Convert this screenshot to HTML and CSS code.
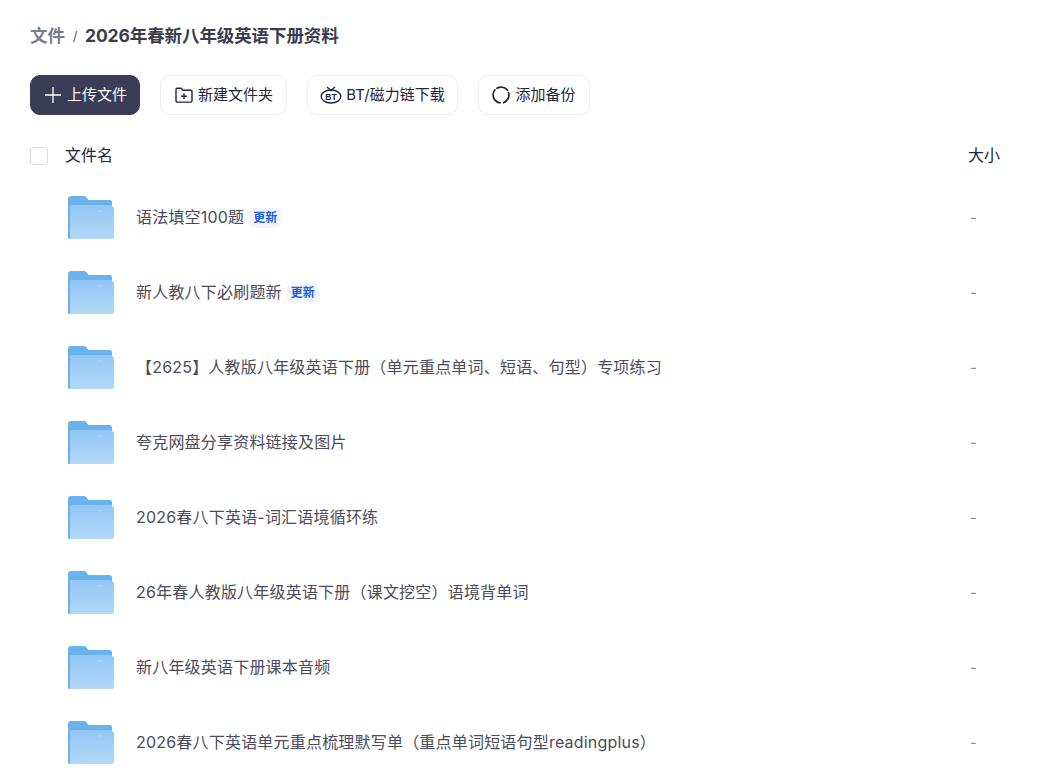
FILE: index.html
```html
<!DOCTYPE html>
<html lang="zh-CN">
<head>
<meta charset="utf-8">
<title>文件</title>
<link rel="stylesheet" href="styles.css">
</head>
<body>
<svg class="defs" width="0" height="0" aria-hidden="true">
  <defs>
    <linearGradient id="folderFront" x1="0" y1="0" x2="0" y2="1">
      <stop offset="0" stop-color="#92c6f3"/>
      <stop offset="1" stop-color="#b2d8f9"/>
    </linearGradient>
    <symbol id="folder" viewBox="0 0 46 43">
      <path d="M0 3a3 3 0 0 1 3-3h12.500c1.500 0 2.500.6 3.300 1.700L20.500 4H41.500a2.500 2.500 0 0 1 2.500 2.500V12H0z" fill="#6ab2ec"/>
      <path d="M0 6h3v37H1.500A1.500 1.500 0 0 1 0 41.500z" fill="#6ab2ec"/>
      <path d="M2 10.500a1.500 1.500 0 0 1 1.500-1.500H42c1 0 1.600.3 2.200 1l1.200 1.200c.4.400.6.900.6 1.500V41a2 2 0 0 1-2 2H2z" fill="url(#folderFront)"/>
      <path d="M30 15h5" stroke="#a9d2f6" stroke-width="1.500"/>
    </symbol>
  </defs>
</svg>
<main class="page">
  <h1 class="crumbs"><span class="crumb-root">文件</span><span class="crumb-sep">/</span><span class="crumb-current">2026年春新八年级英语下册资料</span></h1>

  <div class="toolbar">
    <button class="btn btn-primary">
      <svg class="ico-plus" viewBox="0 0 16 16"><path d="M8 0v16M0 8h16" fill="none" stroke="#fff" stroke-width="1.300"/></svg>
      上传文件
    </button>
    <button class="btn btn-new">
      <svg class="ico" viewBox="0 0 18 18"><path d="M1 14.800V3.500A1.300 1.300 0 0 1 2.300 2.200h3.900l1.700 2h7.800A1.300 1.300 0 0 1 17 5.500v9.300a1.300 1.300 0 0 1-1.300 1.300H2.300A1.300 1.300 0 0 1 1 14.800zM9 7.500v5.500M6.200 10.200h5.600" fill="none" stroke="#23253a" stroke-width="1.400" stroke-linejoin="round"/></svg>
      新建文件夹
    </button>
    <button class="btn btn-bt">
      <svg class="ico ico-bt" viewBox="0 0 22 18"><path d="M7 1l4 3.500L15 1" fill="none" stroke="#23253a" stroke-width="1.400"/><ellipse cx="11" cy="10.500" rx="9.800" ry="6.500" fill="none" stroke="#23253a" stroke-width="1.400"/><text x="11" y="13.500" text-anchor="middle" class="bt-text">BT</text></svg>
      BT/磁力链下载
    </button>
    <button class="btn btn-backup">
      <svg class="ico" viewBox="0 0 18 18"><path d="M5 2.300A8 8 0 0 1 15.500 4.200M16.500 6.500A8 8 0 0 1 11.500 16.600M8 16.900A8 8 0 0 1 1.100 8A8 8 0 0 1 3 3.800" fill="none" stroke="#23253a" stroke-width="1.700" stroke-linecap="round"/></svg>
      添加备份
    </button>
  </div>

  <div class="list-head">
    <span class="checkbox"></span>
    <span class="col-name">文件名</span>
    <span class="col-size">大小</span>
  </div>

  <ul class="list">
    <li class="row"><svg class="folder"><use href="#folder"/></svg><span class="name">语法填空100题</span><span class="badge">更新</span><span class="size">-</span></li>
    <li class="row"><svg class="folder"><use href="#folder"/></svg><span class="name">新人教八下必刷题新</span><span class="badge">更新</span><span class="size">-</span></li>
    <li class="row"><svg class="folder"><use href="#folder"/></svg><span class="name">【2625】人教版八年级英语下册（单元重点单词、短语、句型）专项练习</span><span class="size">-</span></li>
    <li class="row"><svg class="folder"><use href="#folder"/></svg><span class="name">夸克网盘分享资料链接及图片</span><span class="size">-</span></li>
    <li class="row"><svg class="folder"><use href="#folder"/></svg><span class="name">2026春八下英语-词汇语境循环练</span><span class="size">-</span></li>
    <li class="row"><svg class="folder"><use href="#folder"/></svg><span class="name">26年春人教版八年级英语下册（课文挖空）语境背单词</span><span class="size">-</span></li>
    <li class="row"><svg class="folder"><use href="#folder"/></svg><span class="name">新八年级英语下册课本音频</span><span class="size">-</span></li>
    <li class="row"><svg class="folder"><use href="#folder"/></svg><span class="name">2026春八下英语单元重点梳理默写单（重点单词短语句型readingplus）</span><span class="size">-</span></li>
  </ul>
</main>
</body>
</html>
```
FILE: styles.css
```css
* { box-sizing: border-box; }
html, body { margin: 0; height: 100%; overflow: hidden; background: #fff; }
body { font-family: Inter, "Noto Sans CJK SC", sans-serif; color: #23253a; }
.defs { display: block; height: 0; }
.page { padding: 20px 53px 0 30px; }

.crumbs { display: flex; align-items: center; height: 32px; margin: 0; font-size: 17.500px; line-height: 32px; font-weight: 700; color: #3a3c50; }
.crumb-root { color: #7b7c8a; }
.crumb-sep { width: 20px; text-align: center; font-size: 13px; font-weight: 400; color: #55566a; }
.crumb-current { letter-spacing: -.1px; }

.toolbar { display: flex; gap: 20px; margin-top: 23px; }
.btn { display: flex; align-items: center; justify-content: center; gap: 5px; height: 40px; padding: 0 13px; border: 1px solid #eeeef1; border-radius: 10px; background: #fff; color: #23253a; font: 400 15px/20px Inter, "Noto Sans CJK SC", sans-serif; white-space: nowrap; }
.btn-primary { width: 110px; gap: 6px; padding: 0 0 0 2px; background: #3a3d55; border-color: #3a3d55; color: #fff; }
.btn-new { width: 127px; padding: 0 0 0 1px; }
.btn-bt { width: 151px; gap: 4px; padding: 0; }
.btn-backup { width: 112px; }
.ico { width: 18px; height: 18px; flex: none; }
.ico-bt { width: 22px; }
.ico-plus { width: 16px; height: 16px; flex: none; }
.bt-text { font: 700 8.500px "Liberation Sans", sans-serif; fill: #23253a; }

.list-head { display: flex; align-items: center; height: 32px; margin-top: 25px; font-size: 16px; color: #23253a; }
.checkbox { width: 18px; height: 18px; flex: none; border: 1px solid #d9d9de; border-radius: 3px; background: #fff; }
.col-name { margin-left: 17px; flex: 1; padding-bottom: 4px; }
.col-size { width: 32px; padding-bottom: 4px; }

.list { list-style: none; margin: 8px 0 0; padding: 0; }
.row { display: flex; align-items: center; height: 75px; padding-left: 38px; }
.folder { width: 46px; height: 43px; flex: none; margin-right: 22px; }
.name { font-size: 16px; color: #4a4b5c; white-space: nowrap; letter-spacing: .2px; padding-bottom: 4px; }
.badge { height: 20px; padding: 0 4px; margin-left: 5px; border-radius: 5px; background: #f2f5ff; color: #1b5fd9; font-size: 12px; line-height: 20px; font-weight: 700; }
.size { width: 32px; margin-left: auto; font-size: 15px; color: #8a8b96; padding-left: 2px; }
```
